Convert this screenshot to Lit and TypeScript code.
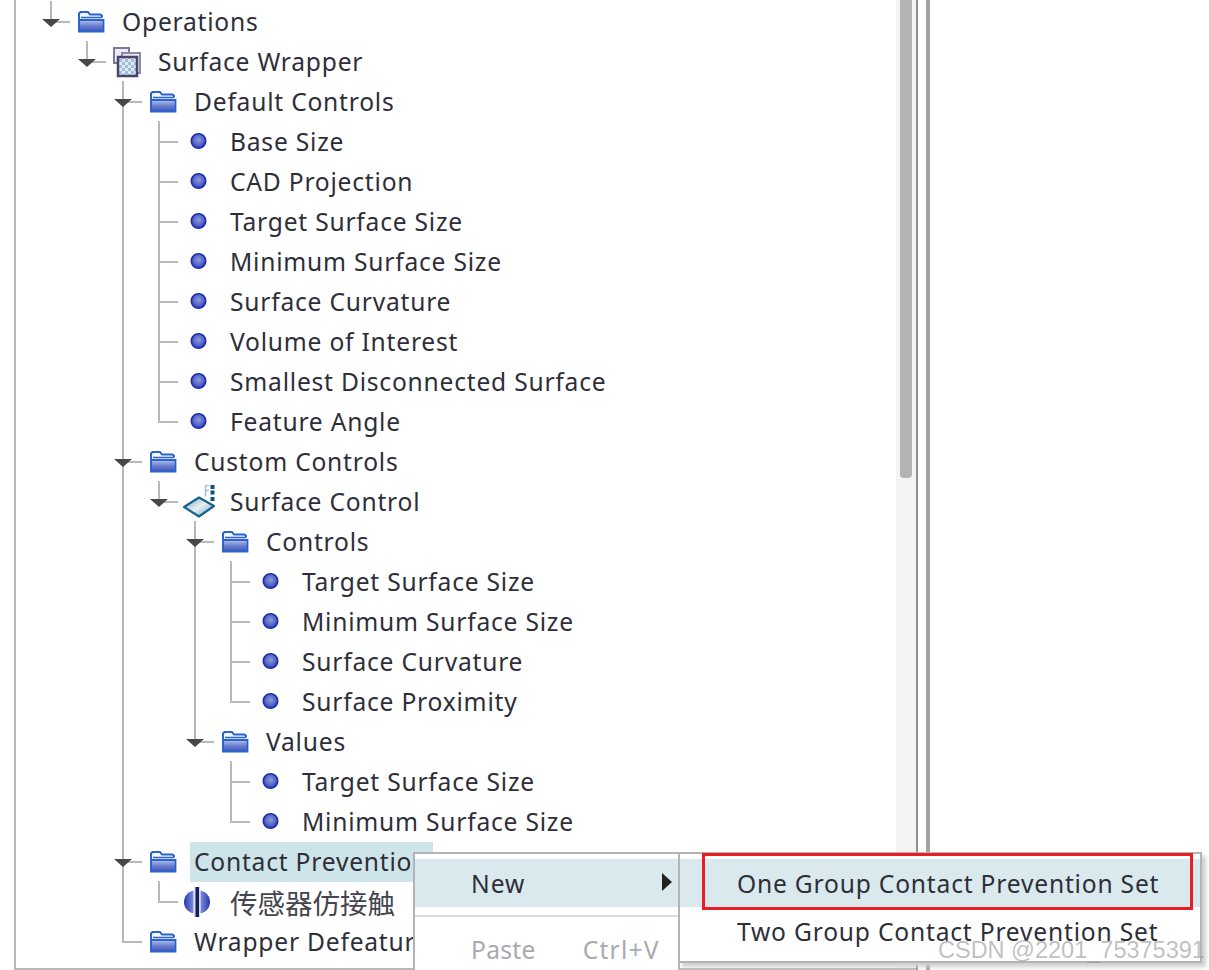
import { LitElement, html, css, svg } from "lit";
import { customElement } from "lit/decorators.js";

type Icon = "folder" | "dot" | "wrapper" | "surface" | "sensor";
interface Row { d: number; label: string; icon: Icon; open?: boolean; guides: number[]; elbow?: boolean; hl?: boolean; cjk?: boolean; }

const r = (d: number, label: string, icon: Icon, guides: number[], extra: Partial<Row> = {}): Row => ({ d, label, icon, guides, ...extra });
const rows: Row[] = [
  r(0, "Operations", "folder", [], { open: true }),
  r(1, "Surface Wrapper", "wrapper", [], { open: true }),
  r(2, "Default Controls", "folder", [2], { open: true }),
  ...["Base Size", "CAD Projection", "Target Surface Size", "Minimum Surface Size", "Surface Curvature", "Volume of Interest", "Smallest Disconnected Surface", "Feature Angle"].map((l, i) =>
    r(3, l, "dot", i < 7 ? [2, 3] : [2], { elbow: i === 7 })),
  r(2, "Custom Controls", "folder", [2], { open: true }),
  r(3, "Surface Control", "surface", [2], { open: true }),
  r(4, "Controls", "folder", [2, 4], { open: true }),
  ...["Target Surface Size", "Minimum Surface Size", "Surface Curvature", "Surface Proximity"].map((l, i) =>
    r(5, l, "dot", i < 3 ? [2, 4, 5] : [2, 4], { elbow: i === 3 })),
  r(4, "Values", "folder", [2], { open: true }),
  ...["Target Surface Size", "Minimum Surface Size"].map((l, i) =>
    r(5, l, "dot", i < 1 ? [2, 5] : [2], { elbow: i === 1 })),
  r(2, "Contact Prevention", "folder", [2], { open: true, hl: true }),
  r(3, "传感器仿接触", "sensor", [2], { elbow: true, cjk: true }),
  r(2, "Wrapper Defeaturing", "folder", [], { elbow: true }),
];

const folder = svg`<svg width="27" height="22" viewBox="0 0 27 22">
  <defs><linearGradient id="fg" x1="0" y1="0" x2="0" y2="1"><stop offset="0" stop-color="#b9c5ea"/><stop offset=".5" stop-color="#6a7ecd"/><stop offset="1" stop-color="#3f58bd"/></linearGradient></defs>
  <path d="M1 20V2.500L2.500 1H10l2 2.500h10.500L24 5v1.500" fill="#f2f6fd" stroke="#2a62cf" stroke-width="2"/>
  <path d="M1 9h24.500v11.500H1z" fill="url(#fg)" stroke="#2a62cf" stroke-width="1.800"/>
  <path d="M3 6.500h21" stroke="#2a62cf" stroke-width="1.500"/></svg>`;
const dot = svg`<svg width="24" height="18" viewBox="0 0 24 18">
  <defs><radialGradient id="dg" cx=".5" cy=".42" r=".6"><stop offset="0" stop-color="#8d99d8"/><stop offset=".65" stop-color="#5163c4"/><stop offset="1" stop-color="#2233b0"/></radialGradient></defs>
  <circle cx="10.500" cy="8" r="7.200" fill="url(#dg)" stroke="#1c2dae" stroke-width="1.600"/></svg>`;
const wrapper = svg`<svg width="30" height="31" viewBox="0 0 30 31">
  <defs><pattern id="ck" width="6" height="6" patternUnits="userSpaceOnUse"><rect width="6" height="6" fill="#e4e8ec"/><rect width="3" height="3" fill="#9cc0dc"/><rect x="3" y="3" width="3" height="3" fill="#9cc0dc"/></pattern></defs>
  <rect x="1" y="1" width="15" height="15" fill="#ededf4" stroke="#7d789e" stroke-width="2"/>
  <rect x="9" y="6" width="18" height="20" fill="#e8e8ee" stroke="#8d8aa6" stroke-width="2"/>
  <rect x="5" y="10" width="19" height="19" fill="url(#ck)" stroke="#45456f" stroke-width="2.500"/></svg>`;
const surface = svg`<svg width="34" height="34" viewBox="0 0 34 34">
  <defs><linearGradient id="sg" x1="0" y1="0" x2="1" y2="1"><stop offset="0" stop-color="#7fa9c1"/><stop offset=".5" stop-color="#e6eef2"/><stop offset="1" stop-color="#6f9db8"/></linearGradient></defs>
  <path d="M1 22L16 12.500l15 8.500-15 10.500z" fill="url(#sg)" stroke="#17658e" stroke-width="2.200" stroke-linejoin="round"/>
  <path d="M22.500 .500v11M22.500 .500h3.500M22.500 5.500h3.500" stroke="#a8c4d6" stroke-width="1.600" fill="none"/>
  <rect x="27.500" y="0" width="4" height="4" fill="#0e5277"/><rect x="27.500" y="5.500" width="4" height="4" fill="#0e5277"/><rect x="27.500" y="12" width="4" height="4" fill="#0e5277"/></svg>`;
const sensor = svg`<svg width="31" height="30" viewBox="0 0 31 30">
  <defs><linearGradient id="sn" x1="0" y1="0" x2="1" y2="0"><stop offset="0" stop-color="#2537b4"/><stop offset=".6" stop-color="#5a6cc9"/><stop offset="1" stop-color="#8090d6"/></linearGradient>
  <linearGradient id="sn2" x1="0" y1="0" x2="1" y2="0"><stop offset="0" stop-color="#8090d6"/><stop offset=".4" stop-color="#5a6cc9"/><stop offset="1" stop-color="#2537b4"/></linearGradient></defs>
  <path d="M9.500 3.500C3 5 0 10 0 15s3 10 9.500 11.500z" fill="url(#sn)"/><path d="M16.500 3.500C23 5 26 10 26 15s-3 10-9.500 11.500z" fill="url(#sn2)"/>
  <rect x="10" y="0" width="6" height="30" fill="#d8dce6"/><rect x="11.500" y="0" width="3.500" height="30" fill="#14205e"/></svg>`;
const icons: Record<Icon, unknown> = { folder, dot, wrapper, surface, sensor };

@customElement("app-root")
export class AppRoot extends LitElement {
  static styles = css`
    :host { display: block; width: 1209px; height: 970px; overflow: hidden; position: relative; background: #fff;
      font-family: "Noto Sans", "Open Sans", sans-serif; font-size: 24.600px; color: #2e2e38; }
    .panes { display: flex; height: 970px; box-sizing: border-box; }
    .tree { width: 882px; margin-left: 14px; height: 970px; box-sizing: border-box; border-left: 2px solid #b8b8b8; border-bottom: 2px solid #b8b8b8; padding: 2px 0 0 17px; overflow: hidden; }
    .scroll { width: 20px; background: #f4f4f4; padding: 0 4px; box-sizing: border-box; height: 970px; border-bottom: 2px solid #b8b8b8; }
    .thumb { height: 478px; background: #b3b3b3; border-radius: 0 0 4px 4px; }
    .split { width: 8px; height: 970px; border-left: 2px solid #8f8f8f; border-right: 4px solid #a2a2a2; }
    .row { display: flex; align-items: center; height: 40px; white-space: nowrap; }
    .cell { width: 36px; height: 40px; flex: none; position: relative; }
    .cell.pipe::before, .cell.open::before, .cell.elbow::before { content: ""; position: absolute; left: 17px; width: 2px; background: #b8b8b8; top: -1px; }
    .cell.pipe::before { bottom: 0; }
    .cell.elbow::before { height: 22px; }
    .cell.open::before { height: 22px; }
    .cell.pipe.h::after, .cell.elbow::after, .cell.open::after { content: ""; position: absolute; left: 18px; width: 19px; height: 2px; top: 19px; background: #b8b8b8; }
    .arrow { position: absolute; left: 9px; top: 17px; width: 0; height: 0; border-left: 9px solid transparent; border-right: 9px solid transparent; border-top: 8px solid #484848; z-index: 1; }
    .icon { width: 27px; height: 40px; margin-left: 9px; flex: none; display: flex; align-items: center; justify-content: center; }
    .icon svg { flex: none; }
    .label { margin-left: 13px; padding: 0 5px 0 4px; height: 40px; line-height: 40px; letter-spacing: 0.780px; }
    .label.hl { background: #cde4e9; }
    .label.cjk { font-family: "Noto Sans CJK SC", sans-serif; letter-spacing: 0; font-size: 27.500px; color: #45454f; }
    .menu { position: absolute; left: 413px; top: 852px; width: 267px; height: 130px; box-sizing: border-box; background: #fff; border: 2px solid #b4b4b4; padding-top: 5px; z-index: 2; }
    .item { height: 48px; display: flex; align-items: center; padding-left: 56px; position: relative; letter-spacing: 1px; }
    .item.on { background: #d9e9ee; }
    .tri { position: absolute; left: 247px; top: 14px; width: 0; height: 0; border-left: 10px solid #222; border-top: 9.500px solid transparent; border-bottom: 9.500px solid transparent; }
    .sep { height: 2px; background: #dcdcdc; margin-top: 8px; margin-bottom: 8px; }
    .item.off { color: #a9a9b0; height: 48px; letter-spacing: 0.300px; }
    .item .key { margin-left: 47px; letter-spacing: 1.200px; }
    .sub { position: absolute; left: 678px; top: 852px; width: 524px; height: 111px; box-sizing: border-box; background: #fff; border: 2px solid #b4b4b4; padding-top: 5px; z-index: 3; box-shadow: 4px 4px 4px #d0d0d0; }
    .sub .item { padding-left: 57px; letter-spacing: 0.800px; }
    .red { position: absolute; left: 702px; top: 853px; width: 491px; height: 57px; box-sizing: border-box; border: 3px solid #ed1c24; z-index: 4; }
    .mark { position: absolute; left: 938px; top: 937px; z-index: 5; font-family: "Liberation Sans", sans-serif; font-size: 23.500px; color: rgba(150,150,150,.6); white-space: nowrap; }
  `;

  private renderRow(row: Row) {
    const cells = [];
    for (let i = 0; i <= row.d; i++) {
      let cls = "";
      if (i === row.d) cls = row.open ? "open" : "elbow";
      else if (row.guides.includes(i)) cls = "pipe";
      if (i === row.d && row.guides.includes(i)) cls = row.elbow ? "elbow" : "pipe h";
      cells.push(html`<div class="cell ${cls}">${i === row.d && row.open ? html`<span class="arrow"></span>` : ""}</div>`);
    }
    return html`<div class="row">${cells}<div class="icon">${icons[row.icon]}</div>
      <div class="label ${row.hl ? "hl" : ""} ${row.cjk ? "cjk" : ""}">${row.label}</div></div>`;
  }

  render() {
    return html`
      <div class="panes">
        <div class="tree">${rows.map((x) => this.renderRow(x))}</div>
        <div class="scroll"><div class="thumb"></div></div>
        <div class="split"></div>
      </div>
      <div class="menu">
        <div class="item on">New<span class="tri"></span></div>
        <div class="sep"></div>
        <div class="item off">Paste<span class="key">Ctrl+V</span></div>
      </div>
      <div class="sub">
        <div class="item on">One Group Contact Prevention Set</div>
        <div class="item">Two Group Contact Prevention Set</div>
      </div>
      <div class="red"></div>
      <div class="mark">CSDN @2201_75375391</div>
    `;
  }
}
